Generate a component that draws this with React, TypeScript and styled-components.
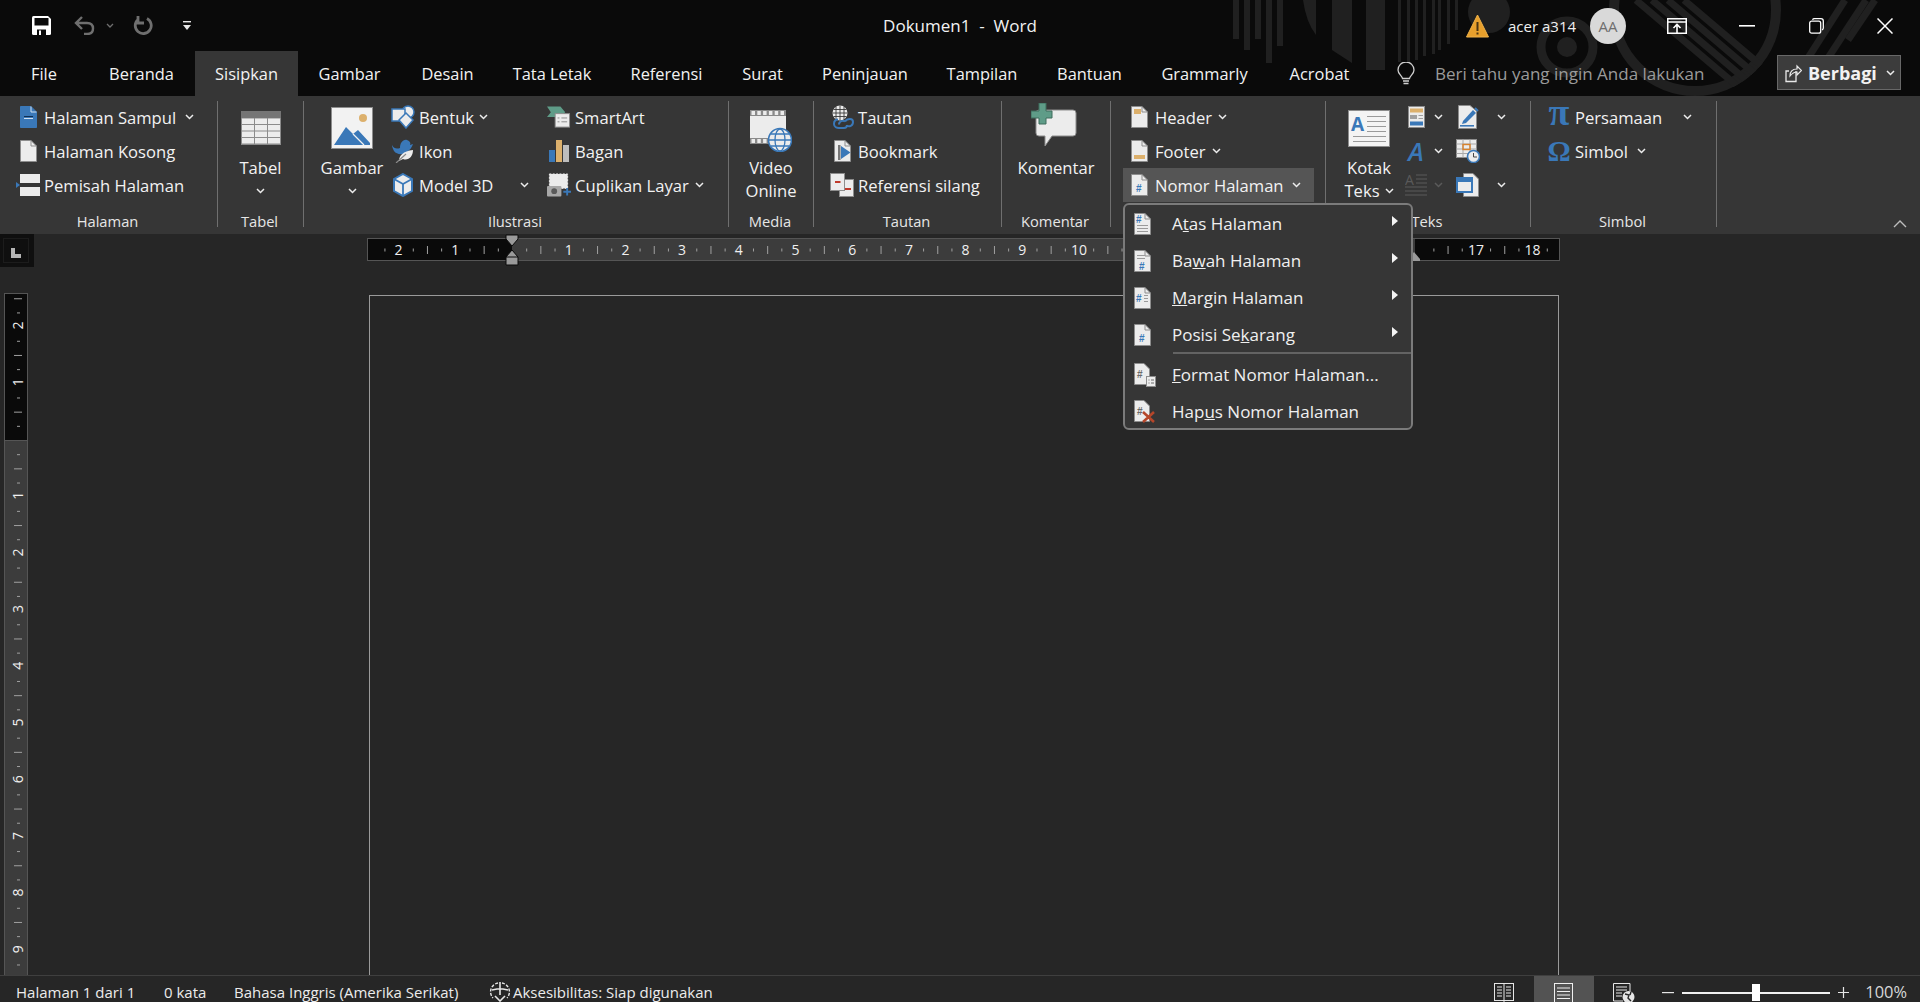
import React from "react";
import styled, { createGlobalStyle } from "styled-components";

const PAGE = "#ececec";
const EDGE = "#8d8d8d";
const BLUE = "#3a78b8";
const TAN = "#dcb06c";
const GREEN = "#5f9c88";

function Doc({ w = 17, h = 22, fill = PAGE, children }: { w?: number; h?: number; fill?: string; children?: React.ReactNode }) {
    return (
        <svg width={w} height={h} viewBox={`0 0 ${w} ${h}`}>
            <path d={`M.5 .5H${w - 6}L${w - .5} 6V${h - .5}H.5Z`} fill={fill} stroke={fill === BLUE ? BLUE : EDGE} />
            <path d={`M${w - 6} .5V6H${w - .5}`} fill="none" stroke={fill === BLUE ? "#cfe0f2" : EDGE} />
            {children}
        </svg>
    );
}

function Chevron({ ml, color = "#ececec" }: { ml?: number; color?: string }) {
    return (
        <ChevSvg $ml={ml} width="9" height="6" viewBox="0 0 9 6">
            <path d="M1 1l3.5 3.5L8 1" fill="none" stroke={color} strokeWidth="1.5" />
        </ChevSvg>
    );
}

function Small({ icon, label, chev, active, inset }: { icon: React.ReactNode; label: string; chev?: number; active?: boolean; inset?: boolean }) {
    return (
        <Row $active={active} $inset={inset}>
            <Slot>{icon}</Slot>
            <RowText>{label}</RowText>
            {chev !== undefined && <Chevron ml={chev} />}
        </Row>
    );
}

function TitleBackdrop() {
    const c = "#202020";
    const thin: [number, number][] = [[1398, 62], [1407, 62], [1415, 60], [1423, 56], [1432, 54], [1438, 50], [1447, 44], [1455, 30]];
    return (
        <Backdrop width="1920" height="96" viewBox="0 0 1920 96">
            <defs>
                <clipPath id="bigDisc"><circle cx="1695" cy="10" r="86" /></clipPath>
            </defs>
            <rect x="1233" width="6" height="39" fill={c} />
            <rect x="1244" width="6" height="50" fill={c} />
            <rect x="1255" width="6" height="39" fill={c} />
            <rect x="1266" width="6" height="63" fill={c} />
            <rect x="1277" width="6" height="46" fill={c} />
            <path d="M1303 0Q1306 22 1316 35V0Z" fill={c} />
            <path d="M1332 0V50L1352 63V0Z" fill={c} />
            <path d="M1366 0V70H1385V0Z" fill={c} />
            {thin.map(([x, h]) => <rect key={x} x={x} width="3" height={h} fill={c} />)}
            <circle cx="1489" cy="12" r="21" fill={c} />
            <circle cx="1567" cy="47" r="26" fill="none" stroke={c} strokeWidth="9" />
            <circle cx="1567" cy="47" r="10" fill={c} />
            <circle cx="1695" cy="10" r="81" fill="none" stroke={c} strokeWidth="10" />
            <g clipPath="url(#bigDisc)" stroke={c} strokeWidth="7">
                <path d="M1636 0L1750 97" />
                <path d="M1652 0L1766 97" />
                <path d="M1668 0L1782 97" />
                <path d="M1684 0L1798 97" />
            </g>
            <g stroke={c} strokeWidth="7">
                <path d="M1808 58L1845 0" />
                <path d="M1828 58L1866 0" />
                <path d="M1848 40L1875 0" />
            </g>
        </Backdrop>
    );
}

function HRuler() {
    const unit = 56.7;
    const zero = 145;
    const marks: React.ReactNode[] = [];
    for (let q = -10; q <= 74; q++) {
        const x = zero + q * unit / 4;
        if (x < 4 || x > 1188 || q === 0 || q === 64) continue;
        if (q % 4 === 0) {
            marks.push(<text key={q} x={x} y="16.5" textAnchor="middle" fontSize="14" fill="#f0f0f0" fontFamily="Open Sans, sans-serif">{Math.abs(q / 4)}</text>);
        } else if (q % 2 === 0) {
            marks.push(<rect key={q} x={x} y="8" width="1" height="8" fill="#a0a0a0" />);
        } else {
            marks.push(<rect key={q} x={x} y="10.5" width="1" height="3" fill="#a0a0a0" />);
        }
    }
    return (
        <RulerH width="1193" height="23" viewBox="0 0 1193 23">
            <rect x=".5" y=".5" width="1192" height="22" fill="#0a0a0a" stroke="#555" />
            <rect x={zero} y="1" width="903" height="21" fill="#3c3c3c" />
            {marks}
            <path d="M139 -3H151V1L145 8L139 1Z" fill="#9a9a9a" stroke="#0a0a0a" />
            <path d="M145 12L151 19V27H139V19Z" fill="#9a9a9a" stroke="#0a0a0a" />
            <path d="M139 19H151" stroke="#0a0a0a" />
            <path d="M1047 14L1053 21V23H1041V21Z" fill="#9a9a9a" />
        </RulerH>
    );
}

function VRuler() {
    const unit = 56.7;
    const zero = 147;
    const marks: React.ReactNode[] = [];
    for (let q = -10; q <= 38; q++) {
        const y = zero + q * unit / 4;
        if (y < 4 || y > 680 || q === 0) continue;
        if (q % 4 === 0) {
            marks.push(<text key={q} x="0" y="0" transform={`translate(18.5 ${y - 1}) rotate(-90)`} textAnchor="middle" fontSize="14" fill="#f0f0f0" fontFamily="Open Sans, sans-serif">{Math.abs(q / 4)}</text>);
        } else if (q % 2 === 0) {
            marks.push(<rect key={q} x="10" y={y} width="8" height="1" fill="#a0a0a0" />);
        } else {
            marks.push(<rect key={q} x="13" y={y} width="3" height="1" fill="#a0a0a0" />);
        }
    }
    return (
        <RulerV width="24" height="682" viewBox="0 0 24 682">
            <rect x=".5" y=".5" width="23" height="690" fill="#3c3c3c" stroke="#555" />
            <rect x=".5" y=".5" width="23" height={zero} fill="#0a0a0a" stroke="#555" />
            {marks}
        </RulerV>
    );
}

function MenuItem({ icon, children, more }: { icon: React.ReactNode; children: React.ReactNode; more?: boolean }) {
    return (
        <MenuRow>
            <MenuIcon>{icon}</MenuIcon>
            <MenuText>{children}</MenuText>
            {more && <MenuArrow />}
        </MenuRow>
    );
}

function Hash({ x, y, size = 10 }: { x: number; y: number; size?: number }) {
    return <text x={x} y={y} fontSize={size} fontWeight="700" fill={BLUE} fontFamily="Liberation Sans, sans-serif">#</text>;
}

function Lines({ x, ys, w }: { x: number; ys: number[]; w: number }) {
    return <>{ys.map(y => <rect key={y} x={x} y={y} width={w} height="1" fill="#9a9a9a" />)}</>;
}

function App() {
    return (
        <Shell>
            <GlobalStyle />
            <TitleArea>
                <TitleBackdrop />
                <TitleBar>
                    <QuickAccess>
                        <svg width="19" height="19" viewBox="0 0 19 19">
                            <path d="M0 1.5Q0 0 1.5 0H16L19 3V17.5Q19 19 17.5 19H1.5Q0 19 0 17.5Z" fill="#fff" />
                            <rect x="2.5" y="2" width="14" height="7.5" fill="#0a0a0a" />
                            <rect x="5" y="13.5" width="9" height="5.5" fill="#0a0a0a" />
                            <rect x="7" y="14.5" width="2" height="4.5" fill="#fff" />
                        </svg>
                        <QaUndo width="21" height="19" viewBox="0 0 21 19">
                            <path d="M8 1L2 7L8 13M2 7H13Q19 7 19 12.5T13 18H10" fill="none" stroke="#6f6f6f" strokeWidth="2.4" />
                        </QaUndo>
                        <QaChev width="8" height="5" viewBox="0 0 8 5">
                            <path d="M1 1l3 3 3-3" fill="none" stroke="#6f6f6f" strokeWidth="1.3" />
                        </QaChev>
                        <QaRedo width="20" height="21" viewBox="0 0 20 21">
                            <path d="M14 3.5A8 8 0 1 1 5 4.5M5 1V8H11" fill="none" stroke="#6f6f6f" strokeWidth="2.8" />
                        </QaRedo>
                        <QaMore width="8" height="10" viewBox="0 0 8 10">
                            <rect y="0" width="8" height="1.4" fill="#e6e6e6" />
                            <path d="M0 4H8L4 9Z" fill="#e6e6e6" />
                        </QaMore>
                    </QuickAccess>
                    <DocTitle>{"Dokumen1  -  Word"}</DocTitle>
                    <TitleRight>
                        <svg width="23" height="24" viewBox="0 0 23 24">
                            <path d="M11.5 1L22.5 23H.5Z" fill="#e8a02c" stroke="#f0b24a" />
                            <rect x="10.5" y="8" width="2" height="9" fill="#4a3413" />
                            <rect x="10.5" y="18.5" width="2" height="2" fill="#4a3413" />
                        </svg>
                        <UserName>acer a314</UserName>
                        <Avatar>AA</Avatar>
                        <WinSvg $ml={41} width="20" height="16" viewBox="0 0 20 16">
                            <rect x=".75" y=".75" width="18.5" height="14.5" fill="none" stroke="#fff" strokeWidth="1.5" />
                            <path d="M1 4H19" stroke="#fff" strokeWidth="1.5" />
                            <path d="M10 15V7M6.5 10L10 6.5L13.5 10" fill="none" stroke="#fff" strokeWidth="1.6" />
                        </WinSvg>
                        <WinSvg $ml={52} width="16" height="2" viewBox="0 0 16 2">
                            <rect width="16" height="1.6" fill="#fff" />
                        </WinSvg>
                        <WinSvg $ml={54} width="15" height="16" viewBox="0 0 15 16">
                            <rect x=".7" y="3.2" width="11" height="12" rx="2" fill="none" stroke="#fff" strokeWidth="1.3" />
                            <path d="M3.5 1.7Q4 .7 5.5 .7H12Q14.3 .7 14.3 3V10Q14.3 11.5 13 12" fill="none" stroke="#fff" strokeWidth="1.3" />
                        </WinSvg>
                        <WinSvg $ml={53} width="16" height="16" viewBox="0 0 16 16">
                            <path d="M.5 .5L15.5 15.5M15.5 .5L.5 15.5" stroke="#fff" strokeWidth="1.5" />
                        </WinSvg>
                    </TitleRight>
                </TitleBar>
                <TabRow>
                    <Tab $w={88}>File</Tab>
                    <Tab $w={107}>Beranda</Tab>
                    <Tab $w={103} $active>Sisipkan</Tab>
                    <Tab $w={103}>Gambar</Tab>
                    <Tab $w={93}>Desain</Tab>
                    <Tab $w={116}>Tata Letak</Tab>
                    <Tab $w={113}>Referensi</Tab>
                    <Tab $w={79}>Surat</Tab>
                    <Tab $w={126}>Peninjauan</Tab>
                    <Tab $w={108}>Tampilan</Tab>
                    <Tab $w={107}>Bantuan</Tab>
                    <Tab $w={123}>Grammarly</Tab>
                    <Tab $w={107}>Acrobat</Tab>
                    <Bulb width="18" height="24" viewBox="0 0 18 24">
                        <path d="M5.5 16.5C5 13.5 1 12 1 8A8 8 0 0 1 17 8C17 12 13 13.5 12.5 16.5Z" fill="none" stroke="#cfcfcf" strokeWidth="1.3" />
                        <path d="M6 19H12M6.5 21.5H11.5" stroke="#cfcfcf" strokeWidth="1.4" />
                    </Bulb>
                    <TellMe>Beri tahu yang ingin Anda lakukan</TellMe>
                    <ShareButton>
                        <svg width="17" height="20" viewBox="0 0 17 20">
                            <path d="M11 8V18.5H1V8H4" fill="none" stroke="#e8e8e8" strokeWidth="1.3" />
                            <path d="M5 13C5 8 8 6 12 6V3L16.5 7.5L12 12V9C9 9 7 10.5 5 13Z" fill="none" stroke="#e8e8e8" strokeWidth="1.2" />
                        </svg>
                        <ShareText>Berbagi</ShareText>
                        <Chevron ml={9} />
                    </ShareButton>
                </TabRow>
            </TitleArea>

            <Ribbon>
                <Group $w={217} $pl={16} label="Halaman">
                    <Column>
                        <Small label="Halaman Sampul" chev={9} icon={
                            <Doc fill={BLUE}>
                                <rect x="4" y="10" width="9" height="1" fill="#0f2e52" />
                                <rect x="4" y="12" width="9" height="1" fill="#cfe0f2" />
                            </Doc>
                        } />
                        <Small label="Halaman Kosong" icon={<Doc />} />
                        <Small label="Pemisah Halaman" icon={
                            <svg width="24" height="22" viewBox="0 0 24 22">
                                <rect x="4" y="0" width="20" height="9" fill={PAGE} />
                                <rect x="4" y="13" width="20" height="9" fill={PAGE} />
                                <path d="M0 8L4 11L0 14Z" fill={BLUE} />
                            </svg>
                        } />
                    </Column>
                </Group>
                <Sep />
                <Group $w={85} label="Tabel">
                    <Large $w={85}>
                        <LargeIcon>
                            <svg width="40" height="34" viewBox="0 0 40 34">
                                <rect width="40" height="34" fill="#8b8b8b" />
                                <rect width="40" height="7" fill="#757575" />
                                {[0, 1, 2, 3].map(r => [0, 1, 2].map(c => (
                                    <rect key={`${r}-${c}`} x={1 + c * 13} y={7.5 + r * 6.5} width="12" height="5.5" fill={PAGE} />
                                )))}
                            </svg>
                        </LargeIcon>
                        <LargeText>Tabel</LargeText>
                        <LargeText><Chevron ml={0} /></LargeText>
                    </Large>
                </Group>
                <Sep />
                <Group $w={424} $pl={16} label="Ilustrasi">
                    <Large $w={64}>
                        <LargeIcon>
                            <svg width="42" height="42" viewBox="0 0 42 42">
                                <rect x=".5" y=".5" width="41" height="41" fill="#f2f2f2" stroke={EDGE} />
                                <circle cx="32" cy="11" r="4" fill={TAN} />
                                <path d="M3 38L15 20L22 27L27 23L39 36V38Z" fill={BLUE} />
                                <path d="M22 27L33 38" stroke="#f2f2f2" strokeWidth="1.2" />
                            </svg>
                        </LargeIcon>
                        <LargeText>Gambar</LargeText>
                        <LargeText><Chevron ml={0} /></LargeText>
                    </Large>
                    <Column $w={156} $ml={7}>
                        <Small label="Bentuk" chev={5} icon={
                            <svg width="24" height="24" viewBox="0 0 24 24">
                                <circle cx="17" cy="7" r="6" fill={PAGE} stroke={BLUE} strokeWidth="1.5" />
                                <rect x="1" y="4" width="13" height="12" fill={PAGE} stroke={BLUE} strokeWidth="1.5" />
                                <path d="M15 8L22 15L15 23L8 15Z" fill={PAGE} stroke={BLUE} strokeWidth="1.5" />
                            </svg>
                        } />
                        <Small label="Ikon" icon={
                            <svg width="24" height="24" viewBox="0 0 24 24">
                                <path d="M1 6C3 10 6 10 9 9C9 4 12 0 16 1C19 2 20 4 19 6L22 5C21 8 19 11 16 13C12 16 6 16 3 12C2 10 1 8 1 6Z" fill={BLUE} />
                                <path d="M8 22C8 17 12 12 22 11C22 18 17 22 12 20Z" fill={PAGE} />
                                <path d="M5 24L15 15" stroke="#8a8a8a" strokeWidth="1.2" />
                            </svg>
                        } />
                        <Small label="Model 3D" chev={27} icon={
                            <svg width="24" height="24" viewBox="0 0 24 24">
                                <path d="M12 1L21 6V18L12 23L3 18V6Z" fill={PAGE} stroke={BLUE} strokeWidth="2" />
                                <path d="M3 6L12 11L21 6M12 11V23" fill="none" stroke={BLUE} strokeWidth="1.8" />
                            </svg>
                        } />
                    </Column>
                    <Column>
                        <Small label="SmartArt" icon={
                            <svg width="25" height="22" viewBox="0 0 25 22">
                                <path d="M0 0H14L19 6L14 11H0L4 6Z" fill={GREEN} />
                                <rect x="8.5" y="7.5" width="15" height="14" fill={PAGE} stroke={EDGE} />
                                <path d="M11 12H13M15 12H21M11 16H13M15 16H21" stroke="#8a8a8a" />
                            </svg>
                        } />
                        <Small label="Bagan" icon={
                            <svg width="21" height="22" viewBox="0 0 21 22">
                                <rect x="0" y="10" width="6" height="12" fill={BLUE} />
                                <rect x="7" y="0" width="6" height="22" fill={TAN} />
                                <rect x="14" y="5" width="6" height="17" fill="#bdbdbd" />
                            </svg>
                        } />
                        <Small label="Cuplikan Layar" chev={6} icon={
                            <svg width="25" height="24" viewBox="0 0 25 24">
                                <rect x="2.5" y=".5" width="19" height="15" fill={PAGE} stroke={PAGE} strokeDasharray="2 1.5" />
                                <rect x="0" y="13" width="15" height="11" rx="1" fill="#a8a8a8" />
                                <circle cx="7.5" cy="18.5" r="3" fill="#5a5a5a" />
                                <path d="M21 15V23M17 19H25" stroke={BLUE} strokeWidth="2" />
                            </svg>
                        } />
                    </Column>
                </Group>
                <Sep />
                <Group $w={84} label="Media">
                    <Large $w={84}>
                        <LargeIcon>
                            <svg width="42" height="42" viewBox="0 0 42 42" style={{ marginTop: 5 }}>
                                <rect x="0" y="0" width="36" height="34" fill={PAGE} />
                                <rect x="0" y="0" width="36" height="6" fill="#8a8a8a" />
                                <rect x="0" y="28" width="36" height="6" fill="#8a8a8a" />
                                {[0, 1, 2, 3, 4, 5].map(i => <rect key={i} x={1.5 + i * 5.8} y="1" width="3.5" height="4" fill={PAGE} />)}
                                {[0, 1, 2].map(i => <rect key={i} x={1.5 + i * 5.8} y="29" width="3.5" height="4" fill={PAGE} />)}
                                <circle cx="30" cy="30" r="11.5" fill={PAGE} stroke={BLUE} strokeWidth="1.6" />
                                <ellipse cx="30" cy="30" rx="5" ry="11" fill="none" stroke={BLUE} strokeWidth="1.3" />
                                <path d="M19 30H41M21 24H39M21 36H39" stroke={BLUE} strokeWidth="1.3" />
                            </svg>
                        </LargeIcon>
                        <LargeText>Video</LargeText>
                        <LargeText>Online</LargeText>
                    </Large>
                </Group>
                <Sep />
                <Group $w={187} $pl={16} label="Tautan">
                    <Column>
                        <Small label="Tautan" icon={
                            <svg width="24" height="24" viewBox="0 0 24 24">
                                <circle cx="10" cy="8" r="7.5" fill={PAGE} />
                                <path d="M2.5 8H17.5M3.5 4.5H16.5M3.5 11.5H16.5M10 .5V15.5M6 1.5V14.5M14 1.5V14.5" stroke="#3a3a3a" strokeWidth=".9" />
                                <path d="M9 19.5C9 16 13 15 15 16.5M23 17C23 21 19 22 17 20.5M8 14.5C5 14.5 4 17 4 19C4 22 7 23 9 23H14C16.5 23 17 21 17 20M15 16.5C16 15 18 14 20 14C22 14 23 15.5 23 17" fill="none" stroke={BLUE} strokeWidth="2" />
                            </svg>
                        } />
                        <Small label="Bookmark" icon={
                            <Doc>
                                <rect x="4" y="5" width="2.5" height="15" fill="#777" />
                                <path d="M7 6L16.5 12.5L7 19Z" fill={BLUE} />
                            </Doc>
                        } />
                        <Small label="Referensi silang" icon={
                            <svg width="24" height="24" viewBox="0 0 24 24">
                                <rect x="9.5" y="6.5" width="14" height="17" fill={PAGE} stroke={EDGE} />
                                <rect x="12" y="15" width="9" height="2" fill="#c0392b" />
                                <rect x=".5" y=".5" width="14" height="17" fill={PAGE} stroke={EDGE} />
                                <rect x="5" y="8" width="5.5" height="2" fill="#c0392b" />
                            </svg>
                        } />
                    </Column>
                </Group>
                <Sep />
                <Group $w={108} label="Komentar">
                    <Large $w={108}>
                        <LargeIcon>
                            <svg width="46" height="44" viewBox="0 0 46 44" style={{ marginRight: 4, marginTop: -6 }}>
                                <path d="M5 10Q5 7 8 7H42Q45 7 45 10V30Q45 33 42 33H21L14 43V33H8Q5 33 5 30Z" fill={PAGE} stroke={EDGE} />
                                <path d="M8 0H15V8H21V15H15V21H8V15H0V8H8Z" fill={GREEN} stroke="#3f6d5d" />
                            </svg>
                        </LargeIcon>
                        <LargeText>Komentar</LargeText>
                    </Large>
                </Group>
                <Sep />
                <Group $w={214} $pl={12} label="">
                    <Column>
                        <Small inset label="Header" chev={6} icon={<Doc><rect x="3" y="3" width="7" height="5" fill={TAN} /></Doc>} />
                        <Small inset label="Footer" chev={6} icon={<Doc><rect x="3" y="15" width="11" height="4" fill={TAN} /></Doc>} />
                        <Small active inset label="Nomor Halaman" chev={8} icon={<Doc><Hash x={5} y={18} /></Doc>} />
                    </Column>
                </Group>
                <Sep />
                <Group $w={204} $pl={11} label="Teks">
                    <Large $w={64}>
                        <LargeIcon>
                            <svg width="42" height="37" viewBox="0 0 42 37">
                                <rect x=".5" y=".5" width="41" height="36" fill="#f4f4f4" stroke={EDGE} />
                                <text x="3" y="21" fontSize="19" fontWeight="700" fill={BLUE} fontFamily="Open Sans, sans-serif">A</text>
                                <Lines x={19} ys={[6, 11, 16, 21]} w={19} />
                                <Lines x={5} ys={[26, 31]} w={33} />
                            </svg>
                        </LargeIcon>
                        <LargeText>Kotak</LargeText>
                        <LargeText>Teks<Chevron ml={5} /></LargeText>
                    </Large>
                    <Column $w={38} $ml={3}>
                        <IconRow>
                            <Slot>
                                <svg width="17" height="22" viewBox="0 0 17 22">
                                    <rect x=".5" y=".5" width="16" height="21" fill={PAGE} stroke={EDGE} />
                                    <rect x="2" y="2.5" width="13" height="4" fill={TAN} />
                                    <rect x="2" y="9" width="7" height="4" fill="#a0a0a0" />
                                    <path d="M10.5 9.5H15M10.5 12.5H15" stroke="#a0a0a0" />
                                    <rect x="2" y="15.5" width="13" height="4" fill={BLUE} />
                                </svg>
                            </Slot>
                            <Chevron ml={6} />
                        </IconRow>
                        <IconRow>
                            <Slot><WordArtGlyph>A</WordArtGlyph></Slot>
                            <Chevron ml={6} />
                        </IconRow>
                        <IconRow>
                            <Slot>
                                <svg width="22" height="24" viewBox="0 0 22 24">
                                    <text x="0" y="12" fontSize="14" fill="#5a5a5a" fontFamily="Open Sans, sans-serif">A</text>
                                    <path d="M11 2H22M11 6H22M11 10H22M0 14H22M0 18H22M0 22H22" stroke="#5a5a5a" />
                                </svg>
                            </Slot>
                            <Chevron ml={6} color="#5a5a5a" />
                        </IconRow>
                    </Column>
                    <Column $w={62} $ml={14}>
                        <IconRow>
                            <Slot>
                                <svg width="24" height="24" viewBox="0 0 24 24">
                                    <path d="M2.5 .5H14L20.5 6V23.5H2.5Z" fill={PAGE} stroke={EDGE} />
                                    <path d="M7 16L17 5L20 8L10 18L6 19Z" fill={BLUE} />
                                    <path d="M19 3L22 6" stroke={BLUE} strokeWidth="2" />
                                    <rect x="4" y="20" width="14" height="1.6" fill={BLUE} />
                                </svg>
                            </Slot>
                            <Chevron ml={17} />
                        </IconRow>
                        <IconRow>
                            <Slot>
                                <svg width="24" height="24" viewBox="0 0 24 24">
                                    <rect x=".5" y=".5" width="20" height="18" fill={PAGE} stroke={EDGE} />
                                    <path d="M.5 5H20.5M.5 10H20.5M.5 14.5H20.5M7 .5V18.5M14 .5V18.5" stroke="#a8a8a8" />
                                    <rect x="7" y="5.5" width="7" height="5" fill="none" stroke="#d9822b" strokeWidth="1.4" />
                                    <circle cx="17.5" cy="17.5" r="6" fill={PAGE} stroke={BLUE} strokeWidth="1.6" />
                                    <path d="M17.5 14V18H21" fill="none" stroke="#444" />
                                </svg>
                            </Slot>
                        </IconRow>
                        <IconRow>
                            <Slot>
                                <svg width="24" height="24" viewBox="0 0 24 24">
                                    <path d="M7.5 .5H17L22.5 6V23.5H7.5Z" fill={PAGE} stroke={EDGE} />
                                    <rect x="1" y="5" width="15" height="14" fill={PAGE} stroke={BLUE} strokeWidth="2" />
                                    <rect x="1" y="5" width="15" height="4" fill={BLUE} />
                                </svg>
                            </Slot>
                            <Chevron ml={17} />
                        </IconRow>
                    </Column>
                </Group>
                <Sep />
                <Group $w={185} $pl={16} label="Simbol">
                    <Column>
                        <Row>
                            <Slot><SymbolGlyph $size={38} $top={-5}>π</SymbolGlyph></Slot>
                            <RowText>Persamaan</RowText>
                            <Chevron ml={21} />
                        </Row>
                        <Row>
                            <Slot><SymbolGlyph $size={29} $top={0}>Ω</SymbolGlyph></Slot>
                            <RowText>Simbol</RowText>
                            <Chevron ml={9} />
                        </Row>
                    </Column>
                </Group>
                <Sep />
                <CollapseArea>
                    <svg width="14" height="8" viewBox="0 0 14 8">
                        <path d="M1 7L7 1L13 7" fill="none" stroke="#bdbdbd" strokeWidth="1.4" />
                    </svg>
                </CollapseArea>
            </Ribbon>

            <Workspace>
                <LeftRail>
                    <TabStop><TabStopInner /></TabStop>
                    <VRuler />
                </LeftRail>
                <Main>
                    <HRuler />
                    <PageSheet />
                </Main>
            </Workspace>

            <StatusBar>
                <StatusLeft>
                    <StatusText $w={148}>Halaman 1 dari 1</StatusText>
                    <StatusText $w={70}>0 kata</StatusText>
                    <StatusText $w={255}>Bahasa Inggris (Amerika Serikat)</StatusText>
                    <svg width="22" height="22" viewBox="0 0 22 22">
                        <path d="M9 2A9 9 0 0 0 4 17M13 2A9 9 0 0 1 18 17" fill="none" stroke="#e6e6e6" strokeWidth="1.4" strokeDasharray="3 1.5" />
                        <path d="M3 9L8 8H14L19 9M11 1V14M6 15L11 20L16 15" fill="none" stroke="#e6e6e6" strokeWidth="1.6" />
                    </svg>
                    <StatusText $w={210} $ml={2}>Aksesibilitas: Siap digunakan</StatusText>
                </StatusLeft>
                <StatusRight>
                    <ViewButton>
                        <svg width="20" height="20" viewBox="0 0 20 20">
                            <rect x=".5" y=".5" width="19" height="17" fill="none" stroke="#e6e6e6" />
                            <path d="M10 0V20M3 4H8M3 7H8M3 10H8M3 13H8M12 4H17M12 7H17M12 10H17M12 13H17" stroke="#e6e6e6" />
                        </svg>
                    </ViewButton>
                    <ViewButton $active>
                        <svg width="20" height="20" viewBox="0 0 20 20">
                            <rect x=".5" y=".5" width="18" height="19" fill="none" stroke="#f0f0f0" />
                            <path d="M3 5H16M3 8.5H16M3 12H16M3 15.5H16" stroke="#f0f0f0" />
                        </svg>
                    </ViewButton>
                    <ViewButton>
                        <svg width="22" height="20" viewBox="0 0 22 20">
                            <path d="M10 18H.5V.5H17V8" fill="none" stroke="#e6e6e6" />
                            <path d="M3 4H14M3 7H14M3 10H9M3 13H9" stroke="#e6e6e6" />
                            <circle cx="15.5" cy="14" r="6" fill="#e6e6e6" />
                            <path d="M12 11L16 12L15 15L18 18M18 9L17 12" stroke="#262626" strokeWidth="1.4" fill="none" />
                        </svg>
                    </ViewButton>
                    <ZoomSign $ml={8} width="12" height="11" viewBox="0 0 12 11">
                        <rect y="5" width="12" height="1.2" fill="#e6e6e6" />
                    </ZoomSign>
                    <ZoomSlider><ZoomThumb /></ZoomSlider>
                    <ZoomSign $ml={8} width="11" height="11" viewBox="0 0 11 11">
                        <path d="M0 5.5H11M5.5 0V11" stroke="#e6e6e6" strokeWidth="1.2" />
                    </ZoomSign>
                    <ZoomValue>100%</ZoomValue>
                </StatusRight>
            </StatusBar>

            <Menu>
                <MenuItem more icon={<Doc w={17} h={22}><Hash x={2} y={10} /><Lines x={3} ys={[12, 15, 18]} w={11} /></Doc>}>A<u>t</u>as Halaman</MenuItem>
                <MenuItem more icon={<Doc w={17} h={22}><Lines x={3} ys={[5, 8]} w={8} /><Hash x={5} y={20} /></Doc>}>Ba<u>w</u>ah Halaman</MenuItem>
                <MenuItem more icon={<Doc w={17} h={22}><Hash x={2} y={15} /><Lines x={10} ys={[8, 11, 14]} w={4} /></Doc>}><u>M</u>argin Halaman</MenuItem>
                <MenuItem more icon={<Doc w={17} h={22}><Hash x={5} y={18} /></Doc>}>Posisi Se<u>k</u>arang</MenuItem>
                <MenuSep />
                <MenuItem icon={
                    <svg width="22" height="24" viewBox="0 0 22 24">
                        <path d="M.5 .5H10L15.5 6V21.5H.5Z" fill={PAGE} stroke={EDGE} />
                        <text x="3" y="15" fontSize="10" fontWeight="700" fill="#6a6a6a" fontFamily="Liberation Sans, sans-serif">#</text>
                        <rect x="12.5" y="13.5" width="9" height="10" fill={PAGE} stroke={EDGE} />
                        <path d="M14.5 17H15.5M17 17H20M14.5 20H15.5M17 20H20" stroke="#6a6a6a" />
                    </svg>
                }><u>F</u>ormat Nomor Halaman...</MenuItem>
                <MenuItem icon={
                    <svg width="22" height="24" viewBox="0 0 22 24">
                        <path d="M.5 .5H10L15.5 6V21.5H.5Z" fill={PAGE} stroke={EDGE} />
                        <text x="3" y="15" fontSize="10" fontWeight="700" fill="#6a6a6a" fontFamily="Liberation Sans, sans-serif">#</text>
                        <path d="M9 12L20 22M20 12L9 22" stroke="#b5462a" strokeWidth="2.6" />
                    </svg>
                }>Hap<u>u</u>s Nomor Halaman</MenuItem>
            </Menu>
        </Shell>
    );
}

function Group({ $w, $pl, label, children }: { $w: number; $pl?: number; label: string; children: React.ReactNode }) {
    return (
        <GroupBox $w={$w}>
            <GroupBody $pl={$pl}>{children}</GroupBody>
            <GroupLabel>{label}</GroupLabel>
        </GroupBox>
    );
}

const GlobalStyle = createGlobalStyle`
  html, body { margin: 0; padding: 0; background: #262626; }
  body { font-family: "Open Sans", "Noto Sans", sans-serif; color: #f0f0f0; }
`

const Shell = styled.div`
  position: relative;
  width: 1920px;
  height: 1002px;
  overflow: hidden;
  display: flex;
  flex-direction: column;
  background: #262626;
`

const TitleArea = styled.header`
  position: relative;
  flex: none;
  height: 96px;
  background: #0a0a0a;
`

const Backdrop = styled.svg`
  position: absolute;
  left: 0;
  top: 0;
`

const TitleBar = styled.div`
  position: relative;
  height: 51px;
  display: grid;
  grid-template-columns: 1fr auto 1fr;
  align-items: center;
`

const QuickAccess = styled.div`
  display: flex;
  align-items: center;
  padding-left: 32px;
`

const QaUndo = styled.svg`
  margin-left: 23px;
`

const QaChev = styled.svg`
  margin-left: 11px;
`

const QaRedo = styled.svg`
  margin-left: 19px;
`

const QaMore = styled.svg`
  margin-left: 30px;
`

const DocTitle = styled.div`
  font-size: 17px;
  white-space: pre;
  color: #f2f2f2;
`

const TitleRight = styled.div`
  display: flex;
  align-items: center;
  justify-content: flex-end;
  padding-right: 27px;
`

const UserName = styled.div`
  width: 82px;
  margin-left: 19px;
  font-size: 15px;
  flex: none;
  white-space: nowrap;
`

const Avatar = styled.div`
  width: 36px;
  height: 36px;
  border-radius: 50%;
  background: #d9d9d9;
  color: #6e6e6e;
  font-size: 15px;
  display: flex;
  align-items: center;
  justify-content: center;
  flex: none;
`

const WinSvg = styled.svg<{ $ml: number }>`
  margin-left: ${p => p.$ml}px;
  flex: none;
`

const TabRow = styled.nav`
  position: relative;
  height: 45px;
  display: flex;
`

const Tab = styled.div<{ $w: number; $active?: boolean }>`
  width: ${p => p.$w}px;
  flex: none;
  display: flex;
  align-items: center;
  justify-content: center;
  padding-bottom: 1px;
  box-sizing: border-box;
  font-size: 16.4px;
  color: #f2f2f2;
  background: ${p => p.$active ? "#363636" : "transparent"};
`

const Bulb = styled.svg`
  flex: none;
  align-self: center;
  margin-left: 24px;
`

const TellMe = styled.div`
  margin-left: 20px;
  align-self: center;
  padding-bottom: 1px;
  font-size: 17px;
  color: #9a9a9a;
  white-space: nowrap;
`

const ShareButton = styled.div`
  position: absolute;
  right: 19px;
  top: 4px;
  box-sizing: border-box;
  width: 124px;
  height: 35px;
  display: flex;
  align-items: center;
  padding-left: 7px;
  background: #3c3c3c;
  border: 1px solid #686868;
`

const ShareText = styled.span`
  margin-left: 6px;
  font-size: 18px;
  font-weight: 700;
  color: #f2f2f2;
`

const Ribbon = styled.section`
  flex: none;
  height: 138px;
  display: flex;
  background: #363636;
`

const GroupBox = styled.div<{ $w: number }>`
  width: ${p => p.$w}px;
  flex: none;
  display: flex;
  flex-direction: column;
  padding-top: 4px;
  box-sizing: border-box;
`

const GroupBody = styled.div<{ $pl?: number }>`
  height: 111px;
  display: flex;
  padding-left: ${p => p.$pl ?? 0}px;
`

const GroupLabel = styled.div`
  height: 20px;
  line-height: 20px;
  text-align: center;
  padding-right: 2px;
  font-size: 14.7px;
  color: #e6e6e6;
  white-space: nowrap;
`

const Sep = styled.div`
  flex: none;
  width: 1px;
  height: 126px;
  margin-top: 5px;
  background: #6f6f6f;
`

const Column = styled.div<{ $w?: number; $ml?: number }>`
  display: flex;
  flex-direction: column;
  flex: none;
  ${p => p.$w ? `width: ${p.$w}px;` : ""}
  margin-left: ${p => p.$ml ?? 0}px;
`

const Row = styled.div<{ $active?: boolean; $inset?: boolean }>`
  height: 34px;
  box-sizing: border-box;
  display: flex;
  align-items: center;
  font-size: 16.6px;
  color: #f2f2f2;
  white-space: nowrap;
  ${p => p.$inset ? "padding-left: 4px;" : ""}
  ${p => p.$active ? "width: 191px; background: #555555;" : ""}
`

const IconRow = styled.div`
  height: 34px;
  display: flex;
  align-items: center;
`

const Slot = styled.div`
  width: 24px;
  height: 24px;
  flex: none;
  display: flex;
  align-items: center;
  justify-content: center;
`

const RowText = styled.span`
  margin-left: 4px;
`

const ChevSvg = styled.svg<{ $ml?: number }>`
  flex: none;
  margin-left: ${p => p.$ml ?? 6}px;
`

const Large = styled.div<{ $w: number }>`
  width: ${p => p.$w}px;
  flex: none;
  display: flex;
  flex-direction: column;
  align-items: center;
`

const LargeIcon = styled.div`
  height: 56px;
  display: flex;
  align-items: center;
  justify-content: center;
`

const LargeText = styled.div`
  height: 23px;
  display: flex;
  align-items: center;
  font-size: 16.6px;
  color: #f2f2f2;
  white-space: nowrap;
`

const WordArtGlyph = styled.span`
  font-family: "Open Sans", sans-serif;
  font-style: italic;
  font-weight: 600;
  font-size: 26px;
  line-height: 24px;
  color: ${BLUE};
`

const SymbolGlyph = styled.span<{ $size: number; $top: number }>`
  font-family: "Liberation Serif", serif;
  font-size: ${p => p.$size}px;
  font-weight: 700;
  line-height: 24px;
  color: ${BLUE};
  transform: translateY(${p => p.$top}px);
`

const CollapseArea = styled.div`
  flex: 1;
  display: flex;
  align-items: flex-end;
  justify-content: flex-end;
  padding: 0 13px 6px 0;
`

const Workspace = styled.main`
  flex: 1;
  min-height: 0;
  display: flex;
`

const LeftRail = styled.div`
  width: 34px;
  flex: none;
  display: flex;
  flex-direction: column;
`

const TabStop = styled.div`
  height: 33px;
  background: #0f0f0f;
  padding: 4px 5px 4px 3px;
  box-sizing: border-box;
  flex: none;
`

const TabStopInner = styled.div`
  position: relative;
  height: 100%;
  border: 1px solid #1c1c1c;
  box-sizing: border-box;
  &::after {
    content: "";
    position: absolute;
    left: 7px;
    top: 9px;
    width: 10px;
    height: 10px;
    background: linear-gradient(to right, #b5b5b5 4px, transparent 4px), linear-gradient(to top, #b5b5b5 4px, transparent 4px);
  }
`

const RulerV = styled.svg`
  flex: none;
  margin: 26px 0 0 4px;
  display: block;
`

const Main = styled.div`
  flex: 1;
  display: flex;
  flex-direction: column;
  padding-left: 333px;
`

const RulerH = styled.svg`
  flex: none;
  margin-top: 4px;
  display: block;
  overflow: visible;
`

const PageSheet = styled.div`
  flex: 1;
  width: 1190px;
  margin: 34px 0 0 2px;
  box-sizing: border-box;
  border: 1px solid #9a9a9a;
  border-bottom: 0;
`

const StatusBar = styled.footer`
  flex: none;
  height: 27px;
  box-sizing: border-box;
  display: flex;
  justify-content: space-between;
  border-top: 1px solid #3f3f3f;
  overflow: hidden;
`

const StatusLeft = styled.div`
  display: flex;
  align-items: center;
  padding: 6px 0 0 16px;
`

const StatusText = styled.span<{ $w: number; $ml?: number }>`
  width: ${p => p.$w}px;
  margin-left: ${p => p.$ml ?? 0}px;
  flex: none;
  font-size: 15px;
  color: #ececec;
  white-space: nowrap;
`

const StatusRight = styled.div`
  display: flex;
  align-items: center;
  padding-right: 13px;
`

const ViewButton = styled.div<{ $active?: boolean }>`
  width: 60px;
  height: 26px;
  flex: none;
  display: flex;
  justify-content: center;
  padding-top: 7px;
  box-sizing: border-box;
  background: ${p => p.$active ? "#535353" : "transparent"};
`

const ZoomSign = styled.svg<{ $ml: number }>`
  flex: none;
  margin: 7px 0 0 ${p => p.$ml}px;
`

const ZoomSlider = styled.div`
  position: relative;
  width: 148px;
  height: 2px;
  flex: none;
  margin: 7px 0 0 8px;
  background: #f0f0f0;
`

const ZoomThumb = styled.div`
  position: absolute;
  left: 70px;
  top: -8px;
  width: 8px;
  height: 17px;
  background: #fff;
`

const ZoomValue = styled.div`
  width: 58px;
  flex: none;
  text-align: right;
  font-size: 16.4px;
  color: #d8d8d8;
  padding-top: 4px;
`

const Menu = styled.div`
  position: absolute;
  left: 1123px;
  top: 203px;
  width: 290px;
  height: 227px;
  box-sizing: border-box;
  background: #363636;
  border: 2px solid #7b7b7b;
  border-radius: 6px;
`

const MenuRow = styled.div`
  height: 37px;
  display: flex;
  align-items: center;
`

const MenuIcon = styled.div`
  width: 38px;
  padding-left: 9px;
  flex: none;
  box-sizing: border-box;
  display: flex;
  margin-right: 9px;
`

const MenuText = styled.span`
  font-size: 17px;
  color: #f0f0f0;
  white-space: nowrap;
`

const MenuArrow = styled.span`
  margin-left: auto;
  margin-right: 13px;
  width: 0;
  height: 0;
  border-left: 6px solid #f4f4f4;
  border-top: 5.5px solid transparent;
  border-bottom: 5.5px solid transparent;
  transform: translateY(-3px);
`

const MenuSep = styled.div`
  height: 2px;
  margin: -1px 0 2px 48px;
  background: #636363;
`

export default App;
